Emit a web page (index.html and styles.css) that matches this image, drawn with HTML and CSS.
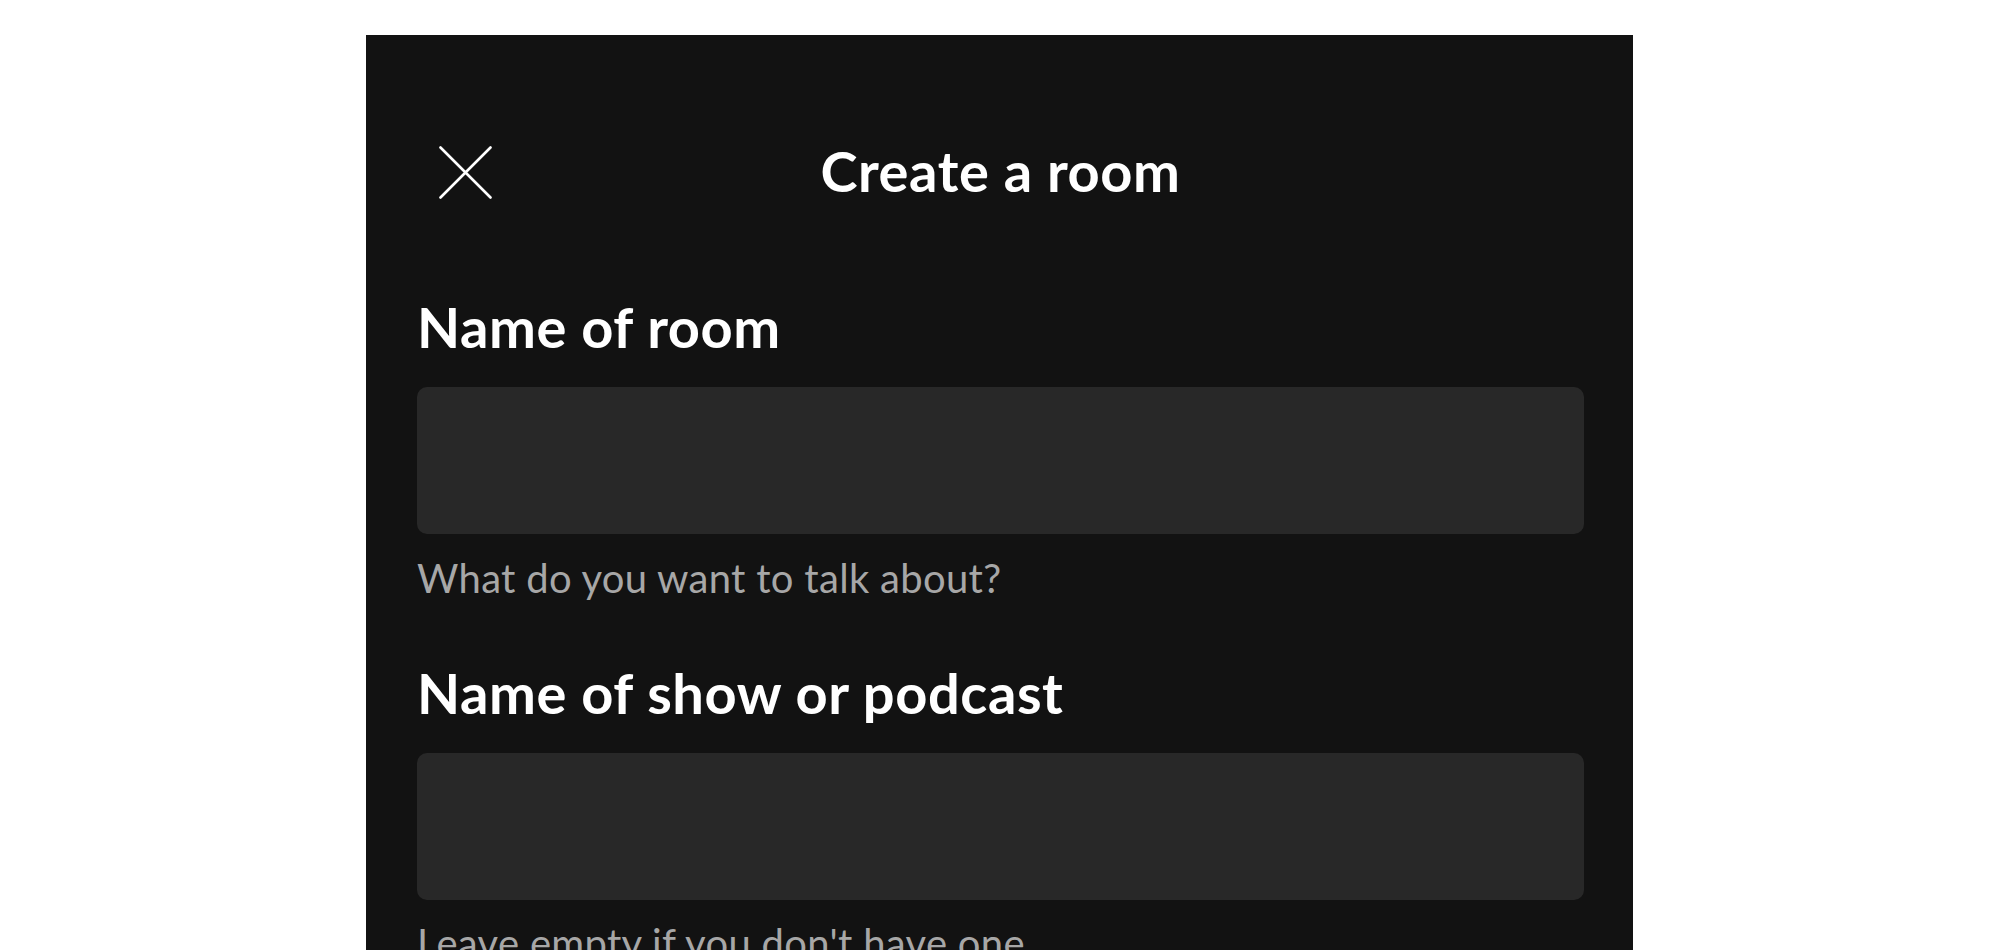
FILE: index.html
```html
<!DOCTYPE html>
<html lang="en">
<head>
<meta charset="utf-8">
<title>Create a room</title>
<link rel="stylesheet" href="styles.css">
</head>
<body>
<main class="sheet">
  <header class="sheet-header">
    <button class="close-btn" type="button" aria-label="Close">
      <svg class="close-icon" width="53" height="53" viewBox="0 0 53 53" aria-hidden="true">
        <path d="M1.5 1.5 L51.5 51.5 M51.5 1.5 L1.5 51.5" stroke="#ffffff" stroke-width="2.6" stroke-linecap="round" fill="none"/>
      </svg>
    </button>
    <h1 class="sheet-title">Create a room</h1>
    <span class="spacer"></span>
  </header>

  <section class="field">
    <label class="field-label" for="room-name">Name of room</label>
    <div class="field-input" id="room-name"></div>
    <p class="field-help">What do you want to talk about?</p>
  </section>

  <section class="field field-next">
    <label class="field-label" for="show-name">Name of show or podcast</label>
    <div class="field-input" id="show-name"></div>
    <p class="field-help">Leave empty if you don't have one</p>
  </section>
</main>
</body>
</html>
```

FILE: styles.css
```css
html, body {
  margin: 0;
  padding: 0;
  background: #ffffff;
  height: 950px;
  overflow: hidden;
}

body {
  font-family: "Lato", "Noto Sans", sans-serif;
  display: flex;
  justify-content: flex-start;
  padding-left: 366px;
  padding-top: 35px;
  box-sizing: border-box;
}

.sheet {
  width: 1267px;
  min-height: 915px;
  background: #121212;
  box-sizing: border-box;
  padding: 86px 49px 0 51px;
  color: #ffffff;
}

.sheet-header {
  height: 100px;
  display: grid;
  grid-template-columns: 1fr auto 1fr;
  align-items: center;
}

.close-btn {
  justify-self: start;
  margin-left: 22px;
  margin-top: 3px;
  padding: 0;
  border: 0;
  background: transparent;
  width: 53px;
  height: 53px;
  display: flex;
}

.close-icon {
  display: block;
}

.sheet-title {
  margin: 0;
  font-size: 56px;
  line-height: 56px;
  font-weight: 700;
  letter-spacing: 0.6px;
  white-space: nowrap;
}

.field {
  margin-top: 72px;
  display: flex;
  flex-direction: column;
}

.field-next {
  margin-top: 57px;
}

.field-label {
  font-size: 56px;
  line-height: 67px;
  font-weight: 700;
  letter-spacing: 0.6px;
  margin-bottom: 27px;
}

.field-input {
  height: 147px;
  background: #282828;
  border-radius: 10px;
}

.field-help {
  margin: 19.5px 0 0;
  font-size: 40px;
  line-height: 48px;
  font-weight: 400;
  color: #a7a7a7;
  letter-spacing: 0.3px;
}
```
